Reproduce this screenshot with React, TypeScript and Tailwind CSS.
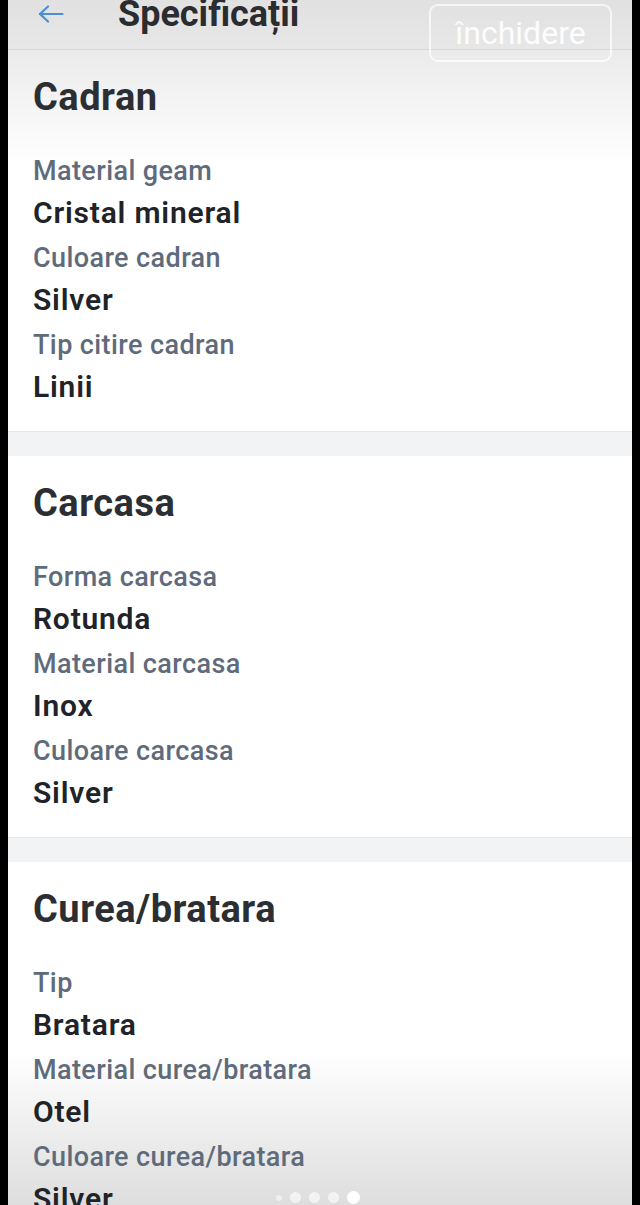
const SECTIONS = [
  {
    title: "Cadran",
    rows: [
      { label: "Material geam", value: "Cristal mineral" },
      { label: "Culoare cadran", value: "Silver" },
      { label: "Tip citire cadran", value: "Linii" },
    ],
  },
  {
    title: "Carcasa",
    rows: [
      { label: "Forma carcasa", value: "Rotunda" },
      { label: "Material carcasa", value: "Inox" },
      { label: "Culoare carcasa", value: "Silver" },
    ],
  },
  {
    title: "Curea/bratara",
    rows: [
      { label: "Tip", value: "Bratara" },
      { label: "Material curea/bratara", value: "Otel" },
      { label: "Culoare curea/bratara", value: "Silver" },
    ],
  },
];

export default function App() {
  return (
    <div
      className="relative h-[1205px] w-[640px] overflow-hidden bg-black px-2"
      style={{ fontFamily: "Roboto, 'Noto Sans', sans-serif" }}
    >
      <div className="relative h-full bg-[#f2f3f5]">
        {/* Header */}
        <div className="relative flex h-[50px] items-start border-b border-[#d8d8d8] bg-gradient-to-b from-[#e1e1e1] to-[#e7e7e7]">
          <div className="ml-[30px] mt-[5px]">
            <svg width="26" height="18" viewBox="0 0 26 18" fill="none" stroke="#4a8fd6" strokeWidth="2.2" strokeLinecap="round" strokeLinejoin="round">
              <path d="M24.5 9H2" />
              <path d="M10 1.5 2 9l8 7.5" />
            </svg>
          </div>
          <h1 className="ml-[54px] mt-[-8px] text-[36px] font-bold leading-[44px] text-[#2a2c30]">Specificații</h1>
        </div>

        <button className="absolute left-[421px] top-[4px] z-20 h-[58px] w-[183px] rounded-[9px] border-2 border-white/70 text-[32px] leading-none text-white/90">
          închidere
        </button>

        {SECTIONS.map((s, i) => (
          <div key={s.title} className={i > 0 ? "border-t border-[#e4e6ea] pt-[24px]" : ""}>
            <section className="relative bg-white px-[25px] pb-[20px] pt-[25px]">
              {i === 0 && (
                <div className="pointer-events-none absolute inset-x-0 top-0 h-[115px] bg-gradient-to-b from-[#ebebeb] to-white/0" />
              )}
              {i === 2 && (
                <div className="pointer-events-none absolute inset-x-0 top-[190px] h-[160px] bg-gradient-to-b from-white to-[#dcdcdc]" />
              )}
              <h2 className="relative text-[38px] font-bold leading-[44px] tracking-[0.5px] text-[#2b2e33]">{s.title}</h2>
              <dl className="relative mt-[31px]">
                {s.rows.map((r) => (
                  <div key={r.label}>
                    <dt className="text-[27px] font-medium leading-[42px] tracking-[0.4px] text-[#5f6b7b]">{r.label}</dt>
                    <dd className="mb-[3px] text-[30px] font-semibold leading-[42px] tracking-[0.8px] text-[#202327]">{r.value}</dd>
                  </div>
                ))}
              </dl>
            </section>
          </div>
        ))}

        {/* page dots */}
        <div className="absolute bottom-[1px] left-[268px] flex items-center gap-[8px]">
          <span className="h-[6px] w-[6px] rounded-full bg-white/50" />
          <span className="h-[11px] w-[11px] rounded-full bg-white/60" />
          <span className="h-[11px] w-[11px] rounded-full bg-white/60" />
          <span className="h-[11px] w-[11px] rounded-full bg-white/60" />
          <span className="h-[13px] w-[13px] rounded-full bg-white" />
        </div>
      </div>
    </div>
  );
}
